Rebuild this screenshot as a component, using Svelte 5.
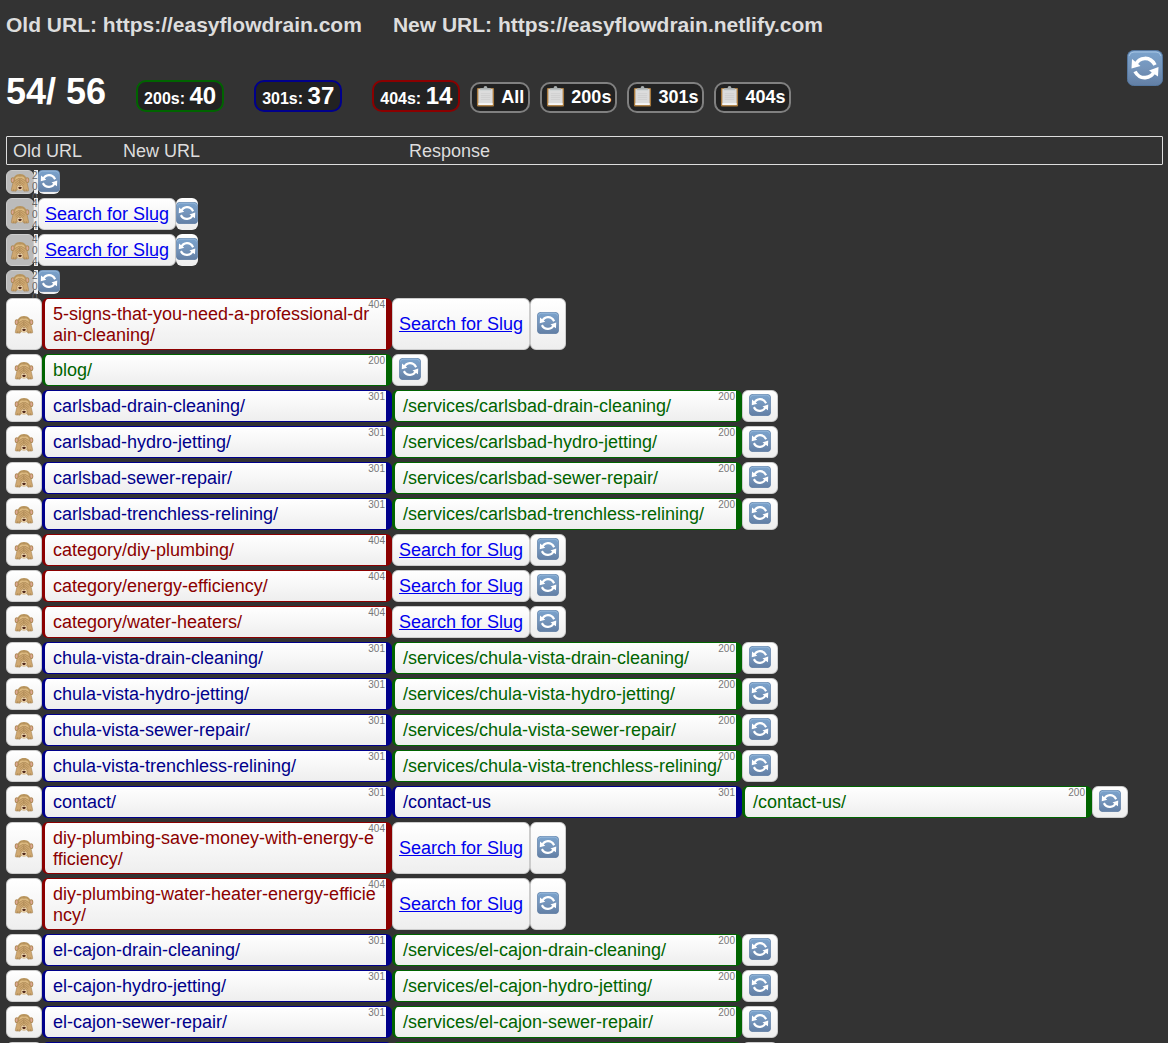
<script>
  const url = (code, text) => ({ code, text });
  const moved = (slug) => [url(301, slug), url(200, '/services/' + slug)];
  const missing = (slug) => [url(404, slug)];

  const rows = [
    { compact: true, chain: [url(200, '')] },
    { compact: true, chain: [url(404, '')] },
    { compact: true, chain: [url(404, '')] },
    { compact: true, chain: [url(200, '')] },
    { chain: missing('5-signs-that-you-need-a-professional-drain-cleaning/') },
    { chain: [url(200, 'blog/')] },
    { chain: moved('carlsbad-drain-cleaning/') },
    { chain: moved('carlsbad-hydro-jetting/') },
    { chain: moved('carlsbad-sewer-repair/') },
    { chain: moved('carlsbad-trenchless-relining/') },
    { chain: missing('category/diy-plumbing/') },
    { chain: missing('category/energy-efficiency/') },
    { chain: missing('category/water-heaters/') },
    { chain: moved('chula-vista-drain-cleaning/') },
    { chain: moved('chula-vista-hydro-jetting/') },
    { chain: moved('chula-vista-sewer-repair/') },
    { chain: moved('chula-vista-trenchless-relining/') },
    { chain: [url(301, 'contact/'), url(301, '/contact-us'), url(200, '/contact-us/')] },
    { chain: missing('diy-plumbing-save-money-with-energy-efficiency/') },
    { chain: missing('diy-plumbing-water-heater-energy-efficiency/') },
    { chain: moved('el-cajon-drain-cleaning/') },
    { chain: moved('el-cajon-hydro-jetting/') },
    { chain: moved('el-cajon-sewer-repair/') },
    { chain: [url(301, ''), url(200, '')] }
  ];

  const totals = [
    { code: 200, count: 40 },
    { code: 301, count: 37 },
    { code: 404, count: 14 }
  ];
  const copies = ['All', '200s', '301s', '404s'];
</script>

{#snippet refreshIcon()}
  <svg class="refresh-icon" viewBox="0 0 36 36" aria-hidden="true">
    <defs>
      <linearGradient id="sky" x1="0" y1="0" x2="0" y2="1">
        <stop offset="0" stop-color="#7aa3cd" />
        <stop offset="0.5" stop-color="#7595bb" />
        <stop offset="1" stop-color="#627fa5" />
      </linearGradient>
    </defs>
    <rect x="0.5" y="0.5" width="35" height="35" rx="6" fill="url(#sky)" stroke="#55779f" />
    <path d="M2 6Q3 2 7 2H29Q33 2 34 6" fill="none" stroke="#a5c3e2" />
    <g fill="none" stroke="#fff" stroke-width="3.600">
      <path d="M8.500 15C12 7 23 5.500 28 15" />
      <path d="M27.500 21C24 29 13 30.500 8 21.500" />
    </g>
    <path d="M5 9L4.500 18.500L13.500 16Z M31.500 17L31 26.500L22 20.500Z" fill="#fff" />
  </svg>
{/snippet}

{#snippet monkeyIcon()}
  <svg class="monkey-icon" viewBox="0 0 40 40" aria-hidden="true">
    <ellipse cx="5" cy="15" rx="4.500" ry="6" fill="#b08c58" />
    <ellipse cx="35" cy="15" rx="4.500" ry="6" fill="#b08c58" />
    <ellipse cx="5" cy="15" rx="2.500" ry="4" fill="#e0a898" />
    <ellipse cx="35" cy="15" rx="2.500" ry="4" fill="#e0a898" />
    <path d="M20 2C10 2 6 8 6 18C6 30 12 37 20 37S34 30 34 18C34 8 30 2 20 2Z" fill="#b8945c" />
    <path d="M20 8C13 5 8 10 10 18L13 32Q20 38 27 32L30 18C32 10 27 5 20 8Z" fill="#dcb981" />
    <path d="M13 28Q20 22 27 28L26 34Q20 39 14 34Z" fill="#ecd3a9" />
    <path d="M17 26H23L20 28Z" fill="#8b6544" />
    <path d="M16 30Q20 28 24 30Q23 34 20 34T16 30Z" fill="#51291c" />
    <path d="M18 11Q20 11 20 15V20Q19 25 14 27L13 37Q12 39 8 38H3Q1 38 2 34L5 21Q8 15 18 11Z" fill="#cfa871" stroke="#9a7647" />
    <path d="M22 11Q20 11 20 15V20Q21 25 26 27L27 37Q28 39 32 38H37Q39 38 38 34L35 21Q32 15 22 11Z" fill="#cfa871" stroke="#9a7647" />
    <path d="M18 15L9 22M19 19L11 25M22 15L31 22M21 19L29 25M6 34V38M10 34V38M30 34V38M34 34V38" stroke="#9a7647" />
  </svg>
{/snippet}

{#snippet clipboardIcon()}
  <svg class="clipboard-icon" viewBox="0 0 20 22" aria-hidden="true">
    <rect x="1" y="2" width="18" height="19.500" rx="1" fill="#a97a3d" />
    <rect x="2.500" y="3" width="15" height="17" fill="#dcdcdc" />
    <path d="M2.500 18H17.500V20H2.500Z" fill="#f7f7f7" />
    <path d="M5 8H15M5 10H15M5 12H15M5 14H15" stroke="#cfcfcf" />
    <path d="M4 4V3Q4 2 6 2H8Q8 0 10 0T12 2H14Q16 2 16 3V4Z" fill="#a9afb0" />
    <path d="M4 4.500H16" stroke="#d0d4d4" />
  </svg>
{/snippet}

<main>
  <header class="sites">
    <h3>Old URL: https://easyflowdrain.com</h3>
    <h3>New URL: https://easyflowdrain.netlify.com</h3>
  </header>

  <section class="toolbar">
    <h1>54/ 56</h1>
    <div class="totals">
      {#each totals as total}
        <h2 class="total s{total.code}">{total.code}s: <strong>{total.count}</strong></h2>
      {/each}
    </div>
    <div class="copies">
      {#each copies as label}
        <button class="copy">{@render clipboardIcon()}{label}</button>
      {/each}
    </div>
    <button class="refresh-all" aria-label="Refresh all">{@render refreshIcon()}</button>
  </section>

  <div class="legend">
    <span>Old URL</span>
    <span>New URL</span>
    <span>Response</span>
  </div>

  <ul class="results">
    {#each rows as row}
      <li class="row" class:compact={row.compact}>
        <button class="cell hide" aria-label="Hide">{@render monkeyIcon()}</button>
        {#each row.chain as step}
          <div class="cell url s{step.code}">
            {step.text}{#if row.compact || step.text}<small class="code">{step.code}</small>{/if}
          </div>
        {/each}
        {#if row.chain[row.chain.length - 1].code === 404}
          <div class="cell search"><a href="#search">Search for Slug</a></div>
        {/if}
        <button class="cell retry" aria-label="Refresh">{@render refreshIcon()}</button>
      </li>
    {/each}
  </ul>
</main>

<style>
  :global(body) {
    background: #333;
  }
  main {
    height: 100vh;
    overflow: hidden;
    box-sizing: border-box;
    padding: 0 5px 0 6px;
    color: #ddd;
    font-family: 'Liberation Sans', Helvetica, Arial, sans-serif;
    font-size: 18px;
    line-height: 21px;
  }
  h1, h2, h3, ul {
    margin: 0;
    padding: 0;
    font-weight: bold;
  }
  button {
    font: inherit;
    color: inherit;
    cursor: pointer;
  }
  svg {
    display: block;
    flex: none;
  }
  .sites {
    display: flex;
    gap: 31px;
    padding: 14px 0;
  }
  .sites h3 {
    font-size: 21px;
    line-height: 22px;
  }
  .toolbar {
    display: flex;
    align-items: center;
    height: 86px;
    color: #fff;
  }
  h1 {
    font-size: 36px;
    line-height: 40px;
    padding-bottom: 2px;
  }
  .totals {
    display: flex;
    gap: 30px;
    margin: 5px 10px 0 30px;
  }
  .total {
    box-sizing: border-box;
    height: 32px;
    padding: 0 6px;
    border: 2px solid;
    border-radius: 10px;
    background: #222;
    font-size: 16px;
    line-height: 28px;
  }
  .total strong {
    font-size: 24px;
    color: #fff;
  }
  .total.s200 { border-color: #006400; }
  .total.s301 { border-color: #00008b; }
  .total.s404 { border-color: #8b0000; }
  .copies {
    display: flex;
    gap: 10px;
    margin-top: 8px;
  }
  .copy {
    display: flex;
    align-items: center;
    gap: 6px;
    height: 31px;
    padding: 0 4px;
    border: 2px solid #808080;
    border-radius: 10px;
    background: #222;
    font-weight: bold;
  }
  .clipboard-icon {
    width: 19px;
    height: 21px;
    margin-bottom: 2px;
  }
  .refresh-all {
    align-self: flex-start;
    margin-left: auto;
    padding: 0;
    border: 0;
    background: none;
  }
  .refresh-all .refresh-icon {
    width: 36px;
    height: 36px;
  }
  .legend {
    display: flex;
    padding: 4px 6px 2px;
    border: 1px solid #ddd;
    border-radius: 1px;
  }
  .legend span:nth-child(1) { width: 110px; }
  .legend span:nth-child(2) { width: 286px; }
  .results {
    display: flex;
    flex-direction: column;
    gap: 4px;
    margin-top: 5px;
    font-weight: normal;
    list-style: none;
  }
  .row {
    display: flex;
    min-height: 32px;
  }
  .cell {
    display: flex;
    align-items: center;
    box-sizing: border-box;
    border: 1px solid #ccc;
    border-radius: 6px;
    background: linear-gradient(#fff, #eee);
  }
  .hide, .retry {
    justify-content: center;
    width: 36px;
    padding: 0;
  }
  .monkey-icon {
    width: 20px;
    height: 19px;
  }
  .refresh-icon {
    width: 22px;
    height: 22px;
  }
  .retry .refresh-icon {
    margin-bottom: 2px;
  }
  .url {
    position: relative;
    display: block;
    width: 350px;
    padding: 5px 8px 3px;
    border-width: 1px 6px 1px 3px;
    word-break: break-all;
  }
  .url.s200 { color: #006400; border-color: #006400; }
  .url.s301 { color: #00008b; border-color: #00008b; }
  .url.s404 { color: #8b0000; border-color: #8b0000; }
  .code {
    position: absolute;
    top: 0;
    right: 1px;
    color: #777;
    font-size: 10px;
    line-height: 11px;
  }
  .search {
    padding: 0 6px;
  }
  .search a {
    color: #00e;
    white-space: nowrap;
  }
  .compact {
    min-height: 24px;
  }
  .compact .hide {
    width: 28px;
    background: #bbb;
  }
  .compact .url {
    width: 4px;
    padding: 0;
    border: 0;
    border-radius: 0;
    background: #eee;
  }
  .compact .code {
    width: 6px;
    max-height: 28px;
    overflow: hidden;
    right: 0;
    color: #666;
  }
  .compact .s404 .code {
    max-height: none;
  }
  .compact .search {
    height: 32px;
  }
  .compact .retry {
    width: 22px;
    border: 0;
  }
</style>
